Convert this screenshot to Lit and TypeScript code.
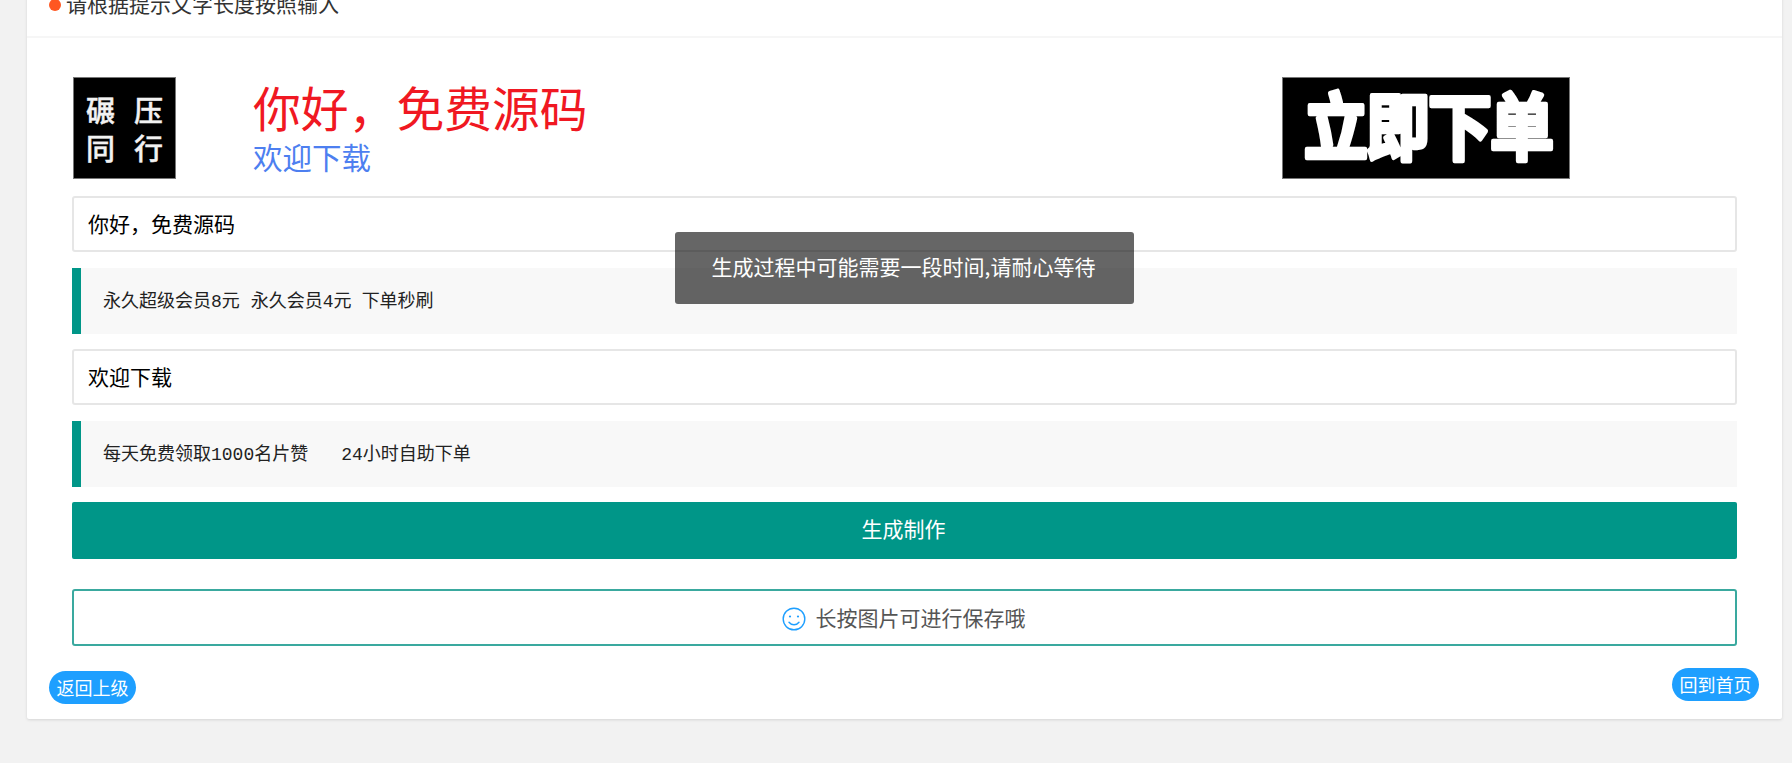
import { LitElement, html, css } from "lit";
import { customElement } from "lit/decorators.js";

@customElement("app-root")
export class AppRoot extends LitElement {
  static styles = css`
    :host {
      display: flow-root;
      min-height: 100vh;
      background: #f2f2f2;
      font-family: "Noto Sans CJK SC", "Liberation Sans", sans-serif;
      color: #333;
      overflow: hidden;
    }
    .card {
      position: relative;
      margin: -20px 10px 0 27px;
      background: #fff;
      border-radius: 2px;
      box-shadow: 0 1px 3px rgba(0, 0, 0, 0.12);
    }
    .head {
      display: flex;
      align-items: center;
      gap: 5px;
      height: 43px;
      padding: 2px 22px 11px;
      border-bottom: 2px solid #f6f6f6;
      font-size: 21px;
      line-height: 43px;
    }
    .dot {
      width: 12px;
      height: 12px;
      border-radius: 50%;
      background: #ff5722;
      flex: none;
      margin-top: 2px;
    }
    .body {
      padding: 39px 45px 0;
    }
    .banner {
      display: flex;
      height: 102px;
      margin-left: 1px;
      margin-right: 167px;
    }
    .logo {
      box-sizing: border-box;
      display: grid;
      grid-template-columns: 48px 30px;
      grid-auto-rows: 38px;
      align-content: center;
      justify-content: center;
      width: 103px;
      flex: none;
      padding-left: 1px;
      border: 1px solid #777;
      background: #000;
      color: #f2f2f2;
      font-size: 29px;
      font-weight: 500;
      line-height: 38px;
      -webkit-text-stroke: 0.4px #f2f2f2;
    }
    .slogan {
      display: flex;
      flex-direction: column;
      margin-left: 77px;
      padding-top: 1px;
    }
    .big {
      font-size: 47.8px;
      line-height: 57px;
      color: #f01822;
      white-space: nowrap;
    }
    .small {
      margin-top: 2px;
      font-size: 29.5px;
      line-height: 38px;
      color: #4d7ff0;
      white-space: nowrap;
    }
    .order {
      box-sizing: border-box;
      margin-left: auto;
      width: 288px;
      border: 1px solid #777;
      background: #000;
    }
    .order svg {
      display: block;
      width: 286px;
      height: 100px;
    }
    .order text {
      font-family: "Noto Sans CJK SC", sans-serif;
      font-size: 64px;
      font-weight: 700;
      letter-spacing: -2px;
      fill: #fff;
      stroke: #fff;
      stroke-width: 4px;
      stroke-linejoin: round;
      text-anchor: middle;
    }
    .input {
      box-sizing: border-box;
      display: flex;
      align-items: center;
      height: 56px;
      padding: 0 0 2px 14px;
      margin-top: 16px;
      border: 2px solid #e6e6e6;
      border-radius: 3px;
      color: #000;
      font-size: 21px;
    }
    .banner + .input {
      margin-top: 17px;
    }
    .quote {
      box-sizing: border-box;
      display: flex;
      align-items: center;
      height: 66px;
      margin: 16px 0 15px;
      padding: 0 0 4px 22px;
      border-left: 9px solid #009688;
      background: #f8f8f8;
      color: #222;
      font-family: "Liberation Mono", "Noto Sans CJK SC", monospace;
      font-size: 18px;
      white-space: pre;
    }
    .quote + .input {
      margin-top: 15px;
    }
    .gap-a {
      margin-left: 11px;
    }
    .gap-b {
      margin-left: 10px;
    }
    .gap-c {
      margin-left: 33px;
    }
    .primary {
      box-sizing: border-box;
      display: flex;
      align-items: center;
      justify-content: center;
      height: 57px;
      padding: 0 2px 5px 0;
      border-radius: 2px;
      background: #009688;
      color: #fff;
      font-size: 21px;
    }
    .hint {
      box-sizing: border-box;
      display: flex;
      align-items: center;
      justify-content: center;
      gap: 10px;
      height: 57px;
      margin-top: 30px;
      padding: 0 2px 2px 0;
      border: 2px solid #3aa99f;
      border-radius: 3px;
      color: #555;
      font-size: 21px;
    }
    .hint svg {
      width: 24px;
      height: 24px;
      flex: none;
      margin-top: 4px;
    }
    .foot {
      display: flex;
      justify-content: space-between;
      align-items: flex-start;
      padding: 22px 23px 15px 22px;
    }
    .pill {
      box-sizing: border-box;
      display: flex;
      align-items: center;
      justify-content: center;
      width: 87px;
      height: 33px;
      padding-bottom: 1px;
      border-radius: 17px;
      background: #1e9fff;
      color: #fff;
      font-size: 18px;
    }
    .pill.back {
      margin-top: 3px;
    }
    .toast {
      position: absolute;
      left: 648px;
      top: 252px;
      box-sizing: border-box;
      display: flex;
      align-items: center;
      justify-content: center;
      width: 459px;
      height: 72px;
      padding: 0 2px 4px 0;
      border-radius: 3px;
      background: rgba(0, 0, 0, 0.6);
      color: #fff;
      font-size: 21px;
      white-space: nowrap;
    }
  `;

  render() {
    return html`
      <div class="card">
        <div class="head"><span class="dot"></span><span>请根据提示文字长度按照输入</span></div>
        <div class="body">
          <div class="banner">
            <div class="logo"><span>碾</span><span>压</span><span>同</span><span>行</span></div>
            <div class="slogan">
              <span class="big">你好，免费源码</span>
              <span class="small">欢迎下载</span>
            </div>
            <div class="order">
              <svg viewBox="0 0 286 100"><text transform="translate(145 76) scale(1 1.14)">立即下单</text></svg>
            </div>
          </div>
          <div class="input">你好，免费源码</div>
          <div class="quote"><span>永久超级会员8元</span><span class="gap-a">永久会员4元</span><span class="gap-b">下单秒刷</span></div>
          <div class="input">欢迎下载</div>
          <div class="quote"><span>每天免费领取1000名片赞</span><span class="gap-c">24小时自助下单</span></div>
          <div class="primary">生成制作</div>
          <div class="hint">
            <svg viewBox="0 0 24 24" fill="none" stroke="#1e9fff" stroke-width="1.4" stroke-linecap="round">
              <circle cx="12" cy="12" r="10.8"></circle>
              <circle cx="8" cy="9.5" r="1.1" fill="#1e9fff" stroke="none"></circle>
              <circle cx="16" cy="9.5" r="1.1" fill="#1e9fff" stroke="none"></circle>
              <path d="M7 15.2c1.4 1.8 3 2.6 5 2.6s3.6-.8 5-2.6"></path>
            </svg>
            <span>长按图片可进行保存哦</span>
          </div>
        </div>
        <div class="foot">
          <div class="pill back">返回上级</div>
          <div class="pill">回到首页</div>
        </div>
        <div class="toast">生成过程中可能需要一段时间,请耐心等待</div>
      </div>
    `;
  }
}
